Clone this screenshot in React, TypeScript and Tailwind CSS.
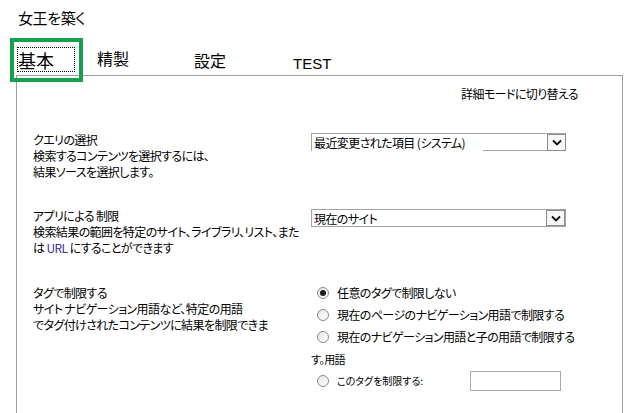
import React from "react";

type Choice = { label: string; checked?: boolean };

const choices: Choice[] = [
  { label: "任意のタグで制限しない", checked: true },
  { label: "現在のページのナビゲーション用語で制限する" },
  { label: "現在のナビゲーション用語と子の用語で制限する" },
];

function Chevron() {
  return (
    <svg width="10" height="7" viewBox="0 0 10 7" fill="none">
      <polyline points="1,1.5 5,5.5 9,1.5" stroke="#111" strokeWidth="1.8" />
    </svg>
  );
}

function Dropdown({ value, split }: { value: string; split?: boolean }) {
  // the first box is drawn with a broken bottom edge under its text
  return (
    <div className={`flex h-[18px] w-[255px] border-l border-t border-[#a3a3a3] ${split ? "" : "border-b border-r"}`}>
      <span className={`whitespace-nowrap pl-[2px] leading-[17px] ${split ? "pr-[18px]" : ""}`}>{value}</span>
      <span className={`flex-1 ${split ? "border-b border-[#a3a3a3]" : ""}`} />
      <span className="flex w-[19px] items-center justify-center border border-[#8c8c8c] bg-[#f7f7f7]">
        <Chevron />
      </span>
    </div>
  );
}

function Radio({ checked }: { checked?: boolean }) {
  return (
    <span className="flex h-[12px] w-[12px] shrink-0 items-center justify-center rounded-full border border-[#8a8a8a] bg-gradient-to-br from-[#e6e6e6] to-white">
      {checked && <span className="h-[6px] w-[6px] rounded-full bg-[#1a1a1a]" />}
    </span>
  );
}

export default function App() {
  return (
    <div className="relative h-[413px] w-[627px] overflow-hidden bg-white text-black font-['Noto_Sans_CJK_JP','Noto_Sans_CJK_SC',sans-serif] [font-feature-settings:'palt']">
      <div className="pl-[18px] pt-[8px] text-[15px] leading-[20px] tracking-[-0.4px]">女王を築く</div>

      {/* tab strip */}
      <div className="flex h-[47px] items-start">
        <div className="ml-[17px] mt-[19px] flex h-[25px] w-[58px] items-center border border-dotted border-black text-[18px] leading-none">
          基本
        </div>
        <div className="ml-[22px] mt-[20px] text-[16px] leading-[20px]">精製</div>
        <div className="ml-[65px] mt-[22px] text-[16px] leading-[20px]">設定</div>
        <div className="ml-[67px] mt-[27px] font-['Liberation_Sans',Arial,sans-serif] text-[15px] leading-[18px]">
          TEST
        </div>
      </div>

      {/* tab page */}
      <div className="ml-[16px] h-[338px] w-[607px] border-x border-t border-[#a0a0a0] pl-[16px] text-[12px] leading-[16px] tracking-[-0.6px]">
        <div className="pr-[44px] pt-[10px] text-right">詳細モードに切り替える</div>

        <div className="mt-[30px] grid grid-cols-[278px_auto]">
          <div className="whitespace-nowrap">
            クエリの選択
            <br />
            検索するコンテンツを選択するには、
            <br />
            結果ソースを選択します。
          </div>
          <div className="mt-[1px]">
            <Dropdown value="最近変更された項目 (システム)" split />
          </div>
        </div>

        <div className="mt-[28px] grid grid-cols-[278px_auto]">
          <div className="whitespace-nowrap">
            アプリによる 制限
            <br />
            検索結果の範囲を特定のサイト、ライブラリ、リスト、また
            <br />
            は <span className="text-[#3b2f9a]">URL</span> にすることができます
          </div>
          <div className="mt-[1px]">
            <Dropdown value="現在のサイト" />
          </div>
        </div>

        <div className="mt-[29px] grid grid-cols-[278px_auto]">
          <div className="whitespace-nowrap">
            タグで制限する
            <br />
            サイト ナビゲーション用語など、特定の用語
            <br />
            でタグ付けされたコンテンツに結果を制限できま
          </div>
          <div className="-mt-[3px]">
            {choices.map((c) => (
              <div key={c.label} className="flex h-[22px] items-center pl-[6px]">
                <Radio checked={c.checked} />
                <span className="ml-[8px] whitespace-nowrap">{c.label}</span>
              </div>
            ))}
            <div className="flex h-[22px] items-center text-[11px]">す。用語</div>
            <div className="flex h-[22px] items-center pl-[6px]">
              <Radio />
              <span className="ml-[8px] w-[133px] whitespace-nowrap text-[10px] tracking-[0px]">このタグを制限する:</span>
              <span className="h-[20px] w-[91px] border border-[#ababab] bg-white" />
            </div>
          </div>
        </div>
      </div>

      {/* highlight around the active tab */}
      <div className="absolute left-[10px] top-[38px] h-[44px] w-[73px] border-[4px] border-[#13a14b]" />
    </div>
  );
}
